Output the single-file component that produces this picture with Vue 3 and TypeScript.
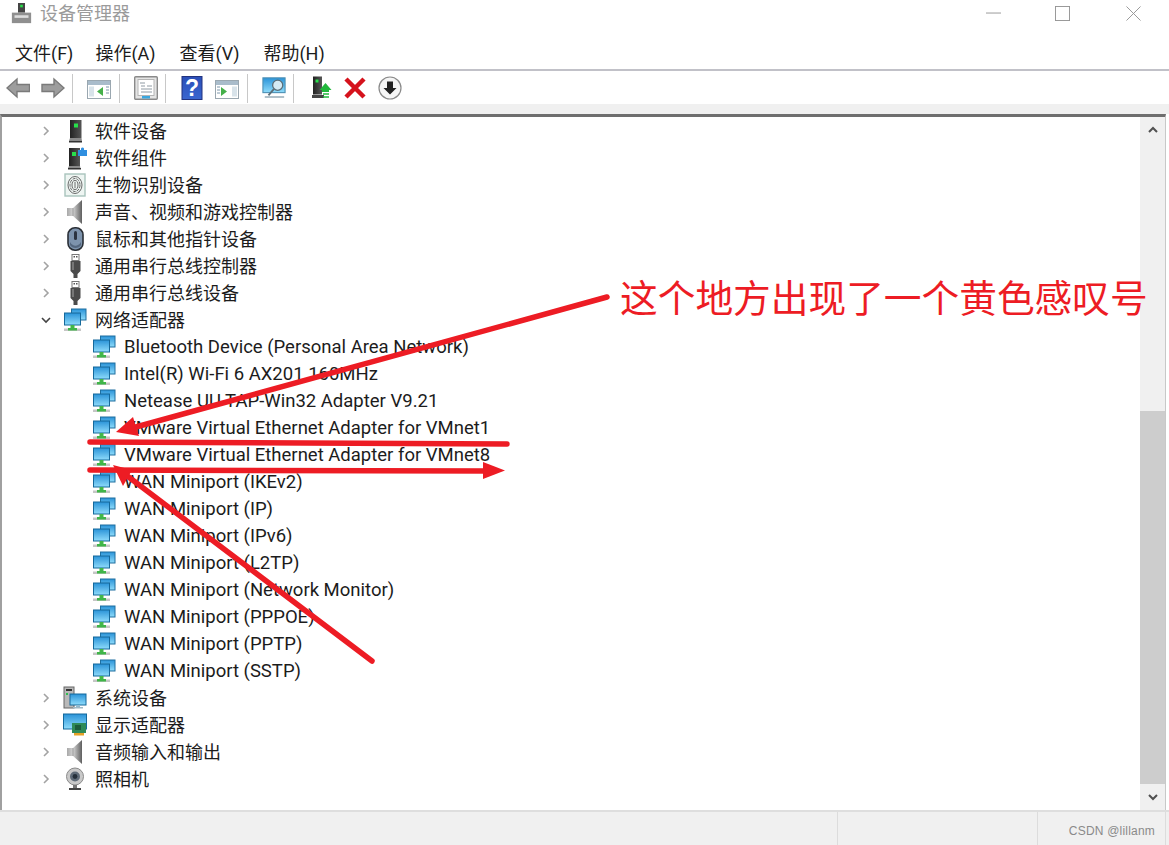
<script setup lang="ts">
interface TreeRow {
  label: string;
  icon: string;
  state?: "closed" | "open";
  child?: boolean;
}

const menus = ["文件(F)", "操作(A)", "查看(V)", "帮助(H)"];

// null marks a separator
const tools: (string | null)[] = [
  "t-back",
  "t-forward",
  null,
  "t-pane-left",
  null,
  "t-sheet",
  null,
  "t-help",
  "t-pane-right",
  null,
  "t-scan",
  null,
  "t-update",
  "t-remove",
  "t-install",
];

const adapters = [
  "Bluetooth Device (Personal Area Network)",
  "Intel(R) Wi-Fi 6 AX201 160MHz",
  "Netease UU TAP-Win32 Adapter V9.21",
  "VMware Virtual Ethernet Adapter for VMnet1",
  "VMware Virtual Ethernet Adapter for VMnet8",
  "WAN Miniport (IKEv2)",
  "WAN Miniport (IP)",
  "WAN Miniport (IPv6)",
  "WAN Miniport (L2TP)",
  "WAN Miniport (Network Monitor)",
  "WAN Miniport (PPPOE)",
  "WAN Miniport (PPTP)",
  "WAN Miniport (SSTP)",
];

const rows: TreeRow[] = [
  { label: "软件设备", icon: "i-server", state: "closed" },
  { label: "软件组件", icon: "i-component", state: "closed" },
  { label: "生物识别设备", icon: "i-finger", state: "closed" },
  { label: "声音、视频和游戏控制器", icon: "i-speaker", state: "closed" },
  { label: "鼠标和其他指针设备", icon: "i-mouse", state: "closed" },
  { label: "通用串行总线控制器", icon: "i-usb", state: "closed" },
  { label: "通用串行总线设备", icon: "i-usb", state: "closed" },
  { label: "网络适配器", icon: "i-net", state: "open" },
  ...adapters.map((label) => ({ label, icon: "i-net", child: true })),
  { label: "系统设备", icon: "i-system", state: "closed" },
  { label: "显示适配器", icon: "i-display", state: "closed" },
  { label: "音频输入和输出", icon: "i-speaker", state: "closed" },
  { label: "照相机", icon: "i-camera", state: "closed" },
];
</script>

<template>
  <div class="window">
    <svg class="defs" width="0" height="0" aria-hidden="true">
      <defs>
        <linearGradient id="screen" x1="0" y1="0" x2="0" y2="1">
          <stop offset="0" stop-color="#2a93d8" />
          <stop offset="1" stop-color="#8fdcfb" />
        </linearGradient>
        <linearGradient id="metal" x1="0" y1="0" x2="1" y2="0">
          <stop offset="0" stop-color="#a8a8a8" />
          <stop offset="0.4" stop-color="#d4d4d4" />
          <stop offset="1" stop-color="#5f5f5f" />
        </linearGradient>
        <linearGradient id="tower" x1="0" y1="0" x2="1" y2="0">
          <stop offset="0" stop-color="#222" />
          <stop offset="1" stop-color="#555" />
        </linearGradient>
        <linearGradient id="helpblue" x1="0" y1="0" x2="0" y2="1">
          <stop offset="0" stop-color="#2a4fb8" />
          <stop offset="1" stop-color="#3a66d0" />
        </linearGradient>

        <symbol id="i-server" viewBox="0 0 24 24">
          <rect x="7" y="1" width="11.500" height="18" fill="url(#tower)" />
          <rect x="11" y="4.500" width="4" height="4" fill="#27e04a" />
          <path d="M7 19h11.500l0.500 3H6z" fill="#8a8a8a" />
          <rect x="6" y="22" width="13" height="1.500" fill="#333" />
        </symbol>
        <symbol id="i-component" viewBox="0 0 24 24">
          <rect x="6" y="2" width="11" height="18" fill="url(#tower)" />
          <rect x="9" y="6" width="4" height="4" fill="#27e04a" />
          <path d="M6 20h11l0.500 2H5z" fill="#8a8a8a" />
          <rect x="5" y="22" width="13" height="1.500" fill="#333" />
          <path d="M15 4h3V2.500a1.600 1.600 0 0 1 3 0V4h3v6h-9z" fill="#2f8fe0" />
        </symbol>
        <symbol id="i-finger" viewBox="0 0 24 24">
          <rect x="2" y="1" width="20" height="22" fill="#eef5f2" stroke="#a9c4bd" stroke-width="1.400" />
          <g fill="none" stroke="#6a6a6a" stroke-width="1">
            <ellipse cx="12" cy="12" rx="7" ry="8.500" />
            <ellipse cx="12" cy="12" rx="5" ry="6.500" stroke-dasharray="3 1" />
            <ellipse cx="12" cy="12" rx="3" ry="4.500" />
            <path d="M12 9v6" />
          </g>
        </symbol>
        <symbol id="i-speaker" viewBox="0 0 24 24">
          <path d="M4 8h6l9-8v24l-9-8H4z" fill="url(#metal)" />
          <path d="M10 8v8" stroke="#9a9a9a" />
        </symbol>
        <symbol id="i-mouse" viewBox="0 0 24 24">
          <rect x="5" y="0.800" width="15" height="22.400" rx="7" fill="#7d93ad" stroke="#2a2f36" stroke-width="1.600" />
          <rect x="11" y="4" width="3" height="9" rx="1.500" fill="#2c3340" />
          <path d="M7 15c3 5 8 5 11 0v3c-2 4-9 4-11 0z" fill="#54677f" />
        </symbol>
        <symbol id="i-usb" viewBox="0 0 24 24">
          <rect x="9" y="0.500" width="7" height="6" fill="#fff" stroke="#777" />
          <rect x="10.500" y="2" width="1.500" height="1.500" fill="#555" />
          <rect x="13" y="2" width="1.500" height="1.500" fill="#555" />
          <path d="M7.500 7h10v10l-3 3v4h-4v-4l-3-3z" fill="#4b4b4b" />
          <rect x="9" y="8" width="2" height="8" fill="#777" />
        </symbol>
        <symbol id="i-net" viewBox="0 0 24 24">
          <rect x="8.500" y="1" width="14.500" height="11" fill="url(#screen)" stroke="#1f6f9f" />
          <rect x="1.500" y="5" width="16" height="12" fill="url(#screen)" stroke="#15699b" />
          <rect x="7.500" y="17" width="4" height="3" fill="#43b649" />
          <rect x="1" y="20.500" width="17" height="2.500" fill="#c6c6c6" />
          <rect x="5" y="20" width="9" height="2.500" fill="#3fb548" />
        </symbol>
        <symbol id="i-system" viewBox="0 0 24 24">
          <rect x="1" y="1" width="10" height="21" fill="#b9b9b9" stroke="#666" />
          <rect x="3" y="3" width="6" height="2" fill="#333" />
          <rect x="3" y="7" width="2" height="2" fill="#2fbf4f" />
          <rect x="7" y="8" width="16" height="11" fill="url(#screen)" stroke="#15699b" />
          <rect x="13" y="19" width="4" height="2" fill="#8fb9cf" />
          <rect x="10" y="21" width="10" height="1.500" fill="#9fb7c4" />
        </symbol>
        <symbol id="i-display" viewBox="0 0 24 24">
          <rect x="0.500" y="1" width="23" height="15" fill="url(#screen)" stroke="#15699b" />
          <rect x="9" y="16" width="6" height="3" fill="#8fb9cf" />
          <rect x="9" y="10" width="14" height="10" fill="#2f8a58" />
          <rect x="12" y="12" width="6" height="5" fill="#1d5b3b" />
          <rect x="11" y="20" width="10" height="2.500" fill="#e5a227" />
        </symbol>
        <symbol id="i-camera" viewBox="0 0 24 24">
          <circle cx="12" cy="9.500" r="8.500" fill="#c9c9c9" stroke="#8a8a8a" />
          <circle cx="12" cy="9.500" r="5" fill="#5f6b78" />
          <circle cx="12" cy="9.500" r="2.400" fill="#25303b" />
          <rect x="10" y="18" width="4" height="3" fill="#777" />
          <rect x="6" y="21" width="12" height="2" fill="#444" />
        </symbol>

        <symbol id="t-back" viewBox="-1 0 24 24">
          <path d="M0 12l10-9v5.500h12.500v7H10V21z" fill="#9d9d9d" stroke="#7a7a7a" stroke-width="1.400" />
        </symbol>
        <symbol id="t-forward" viewBox="0 0 24 24">
          <path d="M23 12l-10-9v5.500H1v7h12V21z" fill="#9d9d9d" stroke="#7a7a7a" stroke-width="1.400" />
        </symbol>
        <symbol id="t-pane-left" viewBox="0 0 24 24">
          <rect x="0.500" y="4.500" width="23" height="18" fill="#fff" stroke="#9aa7b0" />
          <rect x="1" y="5" width="22" height="4" fill="#a9bccb" />
          <rect x="2" y="10.500" width="5" height="10" fill="#d8e3ea" />
          <path d="M16 11v9l-6-4.500z" fill="#45b04a" />
          <path d="M19 11h3M19 14h3M19 17h3" stroke="#7d97ab" />
        </symbol>
        <symbol id="t-pane-right" viewBox="0 0 24 24">
          <rect x="0.500" y="4.500" width="23" height="18" fill="#fff" stroke="#9aa7b0" />
          <rect x="1" y="5" width="22" height="4" fill="#a9bccb" />
          <rect x="17" y="10.500" width="5" height="10" fill="#d8e3ea" />
          <path d="M6 11v9l6-4.500z" fill="#45b04a" />
          <path d="M2 11h3M2 14h3M2 17h3" stroke="#7d97ab" />
        </symbol>
        <symbol id="t-sheet" viewBox="0 0 24 24">
          <rect x="0.700" y="0.700" width="22.600" height="22.600" rx="1" fill="#e4e4e4" stroke="#8a8a8a" stroke-width="1.400" />
          <rect x="4" y="3.500" width="16" height="16" fill="#fff" stroke="#b5b5b5" />
          <path d="M6 7h5M13 10h5M7 10h4M7 13h11M7 16h11" stroke="#8f9aa3" />
          <rect x="8" y="20" width="8" height="2.500" fill="#3aa7df" />
        </symbol>
        <symbol id="t-help" viewBox="0 0 24 24">
          <rect x="2" y="0.500" width="20" height="23" fill="url(#helpblue)" stroke="#22337f" />
          <text x="12" y="20" text-anchor="middle" class="qmark">?</text>
        </symbol>
        <symbol id="t-scan" viewBox="0 0 26 24">
          <rect x="1" y="1" width="24" height="16" fill="url(#screen)" stroke="#4d90b5" stroke-width="1.200" />
          <circle cx="17" cy="9" r="5.500" fill="#d4eaf4" stroke="#5c6e78" stroke-width="1.400" />
          <path d="M13 13l-6 7" stroke="#5c6e78" stroke-width="2" />
          <rect x="3" y="21" width="21" height="1.500" fill="#8ea4b1" />
        </symbol>
        <symbol id="t-update" viewBox="0 0 24 24">
          <rect x="5" y="0.500" width="9" height="18" fill="url(#tower)" />
          <rect x="7.500" y="3.500" width="3" height="3" fill="#27e04a" />
          <rect x="4" y="19" width="12" height="3" fill="#444" />
          <path d="M17.500 7l6 7H21v2h-7v-2h-2.500z" fill="#22b83c" />
          <path d="M15 18h6M15 21h6" stroke="#22b83c" stroke-width="1.500" />
        </symbol>
        <symbol id="t-remove" viewBox="0 0 24 24">
          <path d="M3 3l18 18M21 3L3 21" fill="none" stroke="#d5121c" stroke-width="4.500" />
        </symbol>
        <symbol id="t-install" viewBox="0 0 24 24">
          <circle cx="12" cy="12" r="11" fill="#f6f6f6" stroke="#8a8a8a" stroke-width="1.200" />
          <path d="M9 5.500h6V12h3.500L12 18.500 5.500 12H9z" fill="#222" />
        </symbol>
      </defs>
    </svg>

    <header class="titlebar">
      <svg class="title-icon" viewBox="0 0 24 24">
        <rect x="8" y="0" width="8" height="11" fill="#444" />
        <rect x="10.500" y="2" width="3" height="3" fill="#27e04a" />
        <rect x="1" y="11" width="22" height="12" fill="#8f8f8f" />
        <rect x="4" y="14" width="16" height="3" fill="#ddd" />
      </svg>
      <span class="title">设备管理器</span>
      <div class="controls">
        <svg class="ctl ctl-min" viewBox="0 0 16 16"><path d="M0 7.500h16" /></svg>
        <svg class="ctl ctl-max" viewBox="0 0 16 16"><rect x="0.500" y="0.500" width="15" height="15" /></svg>
        <svg class="ctl ctl-close" viewBox="0 0 16 16"><path d="M0.500 0.500l15 15M15.500 0.500l-15 15" /></svg>
      </div>
    </header>

    <nav class="menubar">
      <span v-for="m in menus" :key="m" class="menu">{{ m }}</span>
    </nav>

    <div class="toolbar">
      <template v-for="(t, i) in tools" :key="i">
        <span v-if="t === null" class="sep"></span>
        <span v-else class="tool">
          <svg class="tool-icon"><use :href="`#${t}`" /></svg>
        </span>
      </template>
    </div>
    <div class="strip"></div>

    <main class="tree-frame">
      <div class="tree">
        <div v-for="r in rows" :key="r.label" class="row" :class="{ child: r.child }">
          <svg v-if="r.state" class="chev" viewBox="0 0 10 10">
            <path v-if="r.state === 'closed'" d="M3 1l4 4-4 4" class="chev-closed" />
            <path v-else d="M1 3l4 4 4-4" class="chev-open" />
          </svg>
          <svg class="row-icon"><use :href="`#${r.icon}`" /></svg>
          <span class="label">{{ r.label }}</span>
        </div>
      </div>
      <aside class="scrollbar">
        <div class="sb-btn">
          <svg viewBox="0 0 10 10"><path d="M1 7l4-4 4 4" /></svg>
        </div>
        <div class="sb-track"><div class="sb-thumb"></div></div>
        <div class="sb-btn">
          <svg viewBox="0 0 10 10"><path d="M1 3l4 4 4-4" /></svg>
        </div>
      </aside>
    </main>

    <footer class="statusbar">
      <span class="cell cell-wide"></span>
      <span class="cell cell-mid"></span>
      <span class="cell cell-mark">CSDN @lillanm</span>
    </footer>

    <svg class="marks" viewBox="0 0 1169 845" aria-hidden="true">
      <g fill="none" stroke="#ed1c24" stroke-width="5.500" stroke-linecap="round">
        <path d="M607 297L125 430" />
        <path d="M90 442L507 444" />
        <path d="M90 470L490 471" />
        <path d="M372 661L122 472" />
      </g>
      <g fill="#ed1c24">
        <path d="M116 432L133 417L139 436z" />
        <path d="M505 470.500L483 462V479z" />
        <path d="M113 465L132 470L123 486z" />
      </g>
    </svg>
    <div class="note">这个地方出现了一个黄色感叹号</div>
  </div>
</template>

<style scoped>
.window {
  position: relative;
  display: flex;
  flex-direction: column;
  width: 1169px;
  height: 845px;
  overflow: hidden;
  background: #fff;
  color: #1c1c1c;
  font-family: Roboto, "Noto Sans CJK SC", sans-serif;
  font-size: 18px;
}

.defs {
  position: absolute;
}

.qmark {
  fill: #fff;
  font-family: "Liberation Sans", sans-serif;
  font-size: 23px;
  font-weight: 700;
}

.titlebar {
  display: flex;
  align-items: center;
  height: 35px;
  padding: 0 28px 8px 11px;
  box-sizing: border-box;
}

.title-icon {
  width: 21px;
  height: 21px;
  margin-right: 8px;
}

.title {
  color: #9b9b9b;
  line-height: 27px;
}

.controls {
  display: flex;
  align-items: center;
  gap: 55px;
  margin-left: auto;
}

.ctl {
  width: 15px;
  height: 15px;
  fill: none;
  stroke: #949494;
  stroke-width: 1;
}

.ctl-max {
  margin-left: -1px;
  margin-right: 1px;
}

.menubar {
  display: flex;
  gap: 24px;
  height: 34px;
  padding-left: 15px;
  box-sizing: border-box;
  line-height: 38px;
}

.menu:first-child {
  margin-right: -2px;
}

.toolbar {
  display: flex;
  align-items: center;
  height: 35px;
  padding-top: 1px;
  box-sizing: border-box;
  border-top: 2px solid #c1c1c8;
}

.tool {
  display: flex;
  align-items: center;
  justify-content: center;
  width: 35px;
  height: 32px;
}

.tool-icon {
  width: 24px;
  height: 24px;
}

.sep {
  width: 1px;
  height: 29px;
  margin: 0 8.500px 0 2px;
  background: #c8c8c8;
}

.strip {
  height: 10px;
  background: #f0f0f0;
}

.tree-frame {
  display: flex;
  height: 696px;
  margin-right: 3px;
  box-sizing: border-box;
  border-top: 3px solid #6e6e6e;
  border-left: 2px solid #a0a0a0;
  border-right: 1px solid #c8c8c8;
}

.tree {
  flex: 1;
  min-width: 0;
}

.row {
  display: flex;
  align-items: center;
  height: 27px;
  padding-left: 39px;
  white-space: nowrap;
}

.row.child {
  padding-left: 90px;
  font-size: 18.500px;
}

.chev {
  width: 10px;
  height: 10px;
  margin-right: 12px;
  fill: none;
  stroke-width: 1.600;
}

.chev-closed {
  stroke: #a3a3a3;
}

.chev-open {
  stroke: #444;
}

.row-icon {
  flex: none;
  width: 24px;
  height: 24px;
  margin-right: 8px;
}

.label {
  margin-bottom: 2px;
}

.row.child .label {
  margin: 0;
}

.scrollbar {
  display: flex;
  flex-direction: column;
  flex: none;
  width: 25px;
  background: #f0f0f0;
}

.sb-btn {
  display: flex;
  align-items: center;
  justify-content: center;
  flex: none;
  height: 26px;
}

.sb-btn svg {
  width: 10px;
  height: 10px;
  fill: none;
  stroke: #505050;
  stroke-width: 2;
}

.sb-track {
  flex: 1;
  display: flex;
  flex-direction: column;
  justify-content: flex-end;
}

.sb-thumb {
  height: 373px;
  background: #cdcdcd;
}

.statusbar {
  display: flex;
  flex: 1;
  border-top: 2px solid #dedede;
  background: #f0f0f0;
}

.cell {
  box-sizing: border-box;
  border-right: 1px solid #dcdcdc;
}

.cell-wide {
  width: 838px;
}

.cell-mid {
  width: 200px;
}

.cell-mark {
  width: 128px;
  padding: 12px 10px 0 0;
  text-align: right;
  color: #8a8a8a;
  font-family: "Liberation Sans", sans-serif;
  font-size: 12px;
  letter-spacing: 0.200px;
}

/* annotations drawn on top of the capture */
.marks {
  position: absolute;
  inset: 0;
  width: 1169px;
  height: 845px;
  pointer-events: none;
}

.note {
  position: absolute;
  left: 620px;
  top: 272px;
  color: #ed1c24;
  font-size: 37.700px;
  line-height: 54px;
  white-space: nowrap;
}
</style>

<style>
html,
body {
  margin: 0;
  background: #fff;
}
</style>
